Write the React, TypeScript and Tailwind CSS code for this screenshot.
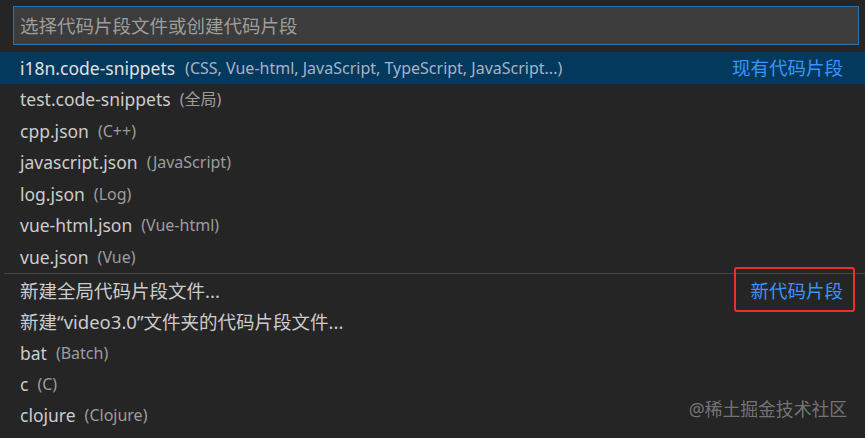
import React from "react";

const items1: [string, string][] = [
  ["test.code-snippets", "(全局)"],
  ["cpp.json", "(C++)"],
  ["javascript.json", "(JavaScript)"],
  ["log.json", "(Log)"],
  ["vue-html.json", "(Vue-html)"],
  ["vue.json", "(Vue)"],
];

const items2: [string, string][] = [
  ["bat", "(Batch)"],
  ["c", "(C)"],
  ["clojure", "(Clojure)"],
];

const font = { fontFamily: '"Segoe UI", "Noto Sans", "Noto Sans CJK SC", sans-serif' };

export default function App() {
  return (
    <div
      className="w-[865px] h-[438px] bg-[#252526] overflow-hidden relative text-[#cccccc]"
      style={font}
    >
      <div className="pt-[6px] pl-[13px] pr-[6px]">
        <div className="h-[39px] bg-[#3c3c3c] border border-[#1f76b8] flex items-center pl-[6px] text-[18.5px] text-[#9e9e9e]">
          选择代码片段文件或创建代码片段
        </div>
      </div>
      <div className="mt-[7px]">
        <div className="h-[31.5px] bg-[#04395e] flex items-center pl-[20px] pr-[22px]">
          <span className="text-[17.5px] text-[#e0e0e0]">i18n.code-snippets</span>
          <span className="ml-[10px] text-[16px] text-[#a6b4c2]">
            (CSS, Vue-html, JavaScript, TypeScript, JavaScript...)
          </span>
          <span className="ml-auto text-[18.5px] text-[#3794ff]">现有代码片段</span>
        </div>
        {items1.map(([a, b]) => (
          <div key={a} className="h-[31.5px] flex items-center pl-[20px]">
            <span className="text-[17.5px]">{a}</span>
            <span className="ml-[9px] text-[16px] text-[#9d9d9d]">{b}</span>
          </div>
        ))}
        <div className="h-[1px] bg-[#454545] ml-[4px]" />
        <div className="pt-[2px]">
          <div className="h-[31px] flex items-center pl-[20px] pr-[22px]">
            <span className="text-[18.5px]">新建全局代码片段文件...</span>
            <span className="ml-auto relative text-[18.5px] text-[#3794ff]">
              新代码片段
              <span className="absolute -left-[16px] -right-[12px] -top-[10px] -bottom-[7px] border-2 border-[#e8312a] rounded-[3px]" />
            </span>
          </div>
          <div className="h-[31px] flex items-center pl-[20px]">
            <span className="text-[18.5px]">新建“video3.0”文件夹的代码片段文件...</span>
          </div>
          {items2.map(([a, b]) => (
            <div key={a} className="h-[31px] flex items-center pl-[20px]">
              <span className="text-[17.5px]">{a}</span>
              <span className="ml-[9px] text-[16px] text-[#9d9d9d]">{b}</span>
            </div>
          ))}
        </div>
      </div>
      <div className="absolute right-[18px] bottom-[15px] text-[17.8px] text-[#8a8a8a]/80">
        @稀土掘金技术社区
      </div>
    </div>
  );
}
